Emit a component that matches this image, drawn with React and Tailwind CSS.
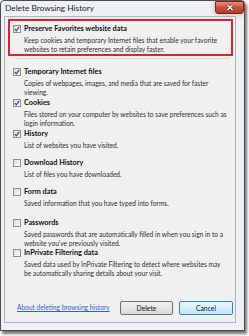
const items = [
  {
    title: 'Temporary Internet files',
    desc: 'Copies of webpages, images, and media that are saved for faster viewing.',
    checked: true,
    h: 'h-[31px]',
  },
  {
    title: 'Cookies',
    desc: 'Files stored on your computer by websites to save preferences such as login information.',
    checked: true,
    h: 'h-[31px]',
  },
  {
    title: 'History',
    desc: 'List of websites you have visited.',
    checked: true,
    h: 'h-[29px]',
  },
  {
    title: 'Download History',
    desc: 'List of files you have downloaded.',
    checked: false,
    h: 'h-[29px]',
  },
  {
    title: 'Form data',
    desc: 'Saved information that you have typed into forms.',
    checked: false,
    h: 'h-[31px]',
  },
  {
    title: 'Passwords',
    desc: 'Saved passwords that are automatically filled in when you sign in to a website you\u2019ve previously visited.',
    checked: false,
    h: 'h-[30px]',
  },
  {
    title: 'InPrivate Filtering data',
    desc: 'Saved data used by InPrivate Filtering to detect where websites may be automatically sharing details about your visit.',
    checked: false,
    h: 'h-[30px]',
  },
];

const CheckBox = ({ checked }) => (
  <span className="w-[8px] h-[8px] shrink-0 border border-[#8e8f8f] bg-gradient-to-br from-[#dcdcdc] to-[#f8f8f8] flex items-center justify-center">
    {checked && (
      <svg width="6" height="6" viewBox="0 0 6 6">
        <path d="M0.8 3.2 L2.3 4.8 L5.2 0.8" fill="none" stroke="#2a4a8f" strokeWidth="1.2" />
      </svg>
    )}
  </span>
);

const Option = ({ title, desc, checked }) => (
  <div className="flex flex-col">
    <div className="flex items-center gap-[3px] h-[10px]">
      <CheckBox checked={checked} />
      <span className="text-[7.3px] font-bold text-[#111] leading-[10px]">{title}</span>
    </div>
    <p className="ml-[11px] mt-[2px] text-[6.6px] leading-[8.5px] text-[#2e2e2e]">{desc}</p>
  </div>
);

export default function App() {
  return (
    <div className="w-[249px] h-[336px] bg-white overflow-hidden font-['Lato','Open_Sans',sans-serif]">
      <div className="w-[245px] h-[331px] flex flex-col border border-[#4a4a4a] rounded-t-[4px] bg-[#eef1f4] shadow-[2px_3px_3px_rgba(0,0,0,0.55)]">
        <div className="h-[15px] flex items-start shrink-0">
          <span className="ml-[4px] mt-[2px] text-[8.3px] leading-[10px] text-[#1c1c1c]">Delete Browsing History</span>
          <div className="ml-auto w-[29px] h-[13px] rounded-b-[3px] border border-[#6e2a22] bg-gradient-to-b from-[#e0907f] via-[#c9503c] to-[#b73a26] shadow-[0_0_6px_rgba(225,110,90,0.6)] flex items-center justify-center">
            <svg width="8" height="7" viewBox="0 0 8 7">
              <path d="M1 0.8 L7 6.2 M7 0.8 L1 6.2" stroke="#5a2019" strokeWidth="2.4" />
              <path d="M1.3 1 L6.7 6 M6.7 1 L1.3 6" stroke="#ffffff" strokeWidth="1.4" />
            </svg>
          </div>
        </div>
        <div className="ml-[3px] mr-[8px] mb-[7px] flex-1 border border-[#aab2bc] bg-[#f0f0f0] flex flex-col">
          <div className="mt-[2px] ml-[3px] mr-[2px] h-[37px] border-2 border-[#e4212b] pt-[3px] pl-[3px] pr-[2px]">
            <Option
              title="Preserve Favorites website data"
              desc="Keep cookies and temporary Internet files that enable your favorite websites to retain preferences and display faster."
              checked
            />
          </div>
          <div className="mt-[2px] ml-[10px] mr-[5px] h-px bg-[#d3d3d3]" />
          <div className="mt-[8px] pl-[8px] pr-[8px] flex flex-col">
            {items.map((item) => (
              <div key={item.title} className={item.h}>
                <Option title={item.title} desc={item.desc} checked={item.checked} />
              </div>
            ))}
          </div>
          <div className="mt-auto mb-[7px] flex items-center">
            <a href="#" className="ml-[12px] text-[6.6px] text-[#2f62c8] underline">About deleting browsing history</a>
            <button className="ml-auto w-[53px] h-[14px] rounded-[2px] border border-[#707070] bg-gradient-to-b from-[#f2f2f2] to-[#d9d9d9] text-[6.8px] text-[#111]">
              Delete
            </button>
            <button className="ml-[6px] mr-[2px] w-[54px] h-[14px] rounded-[2px] border border-[#3c7fb1] bg-gradient-to-b from-[#eaf6fd] to-[#bee6fd] text-[6.8px] text-[#111]">
              Cancel
            </button>
          </div>
        </div>
      </div>
    </div>
  );
}
